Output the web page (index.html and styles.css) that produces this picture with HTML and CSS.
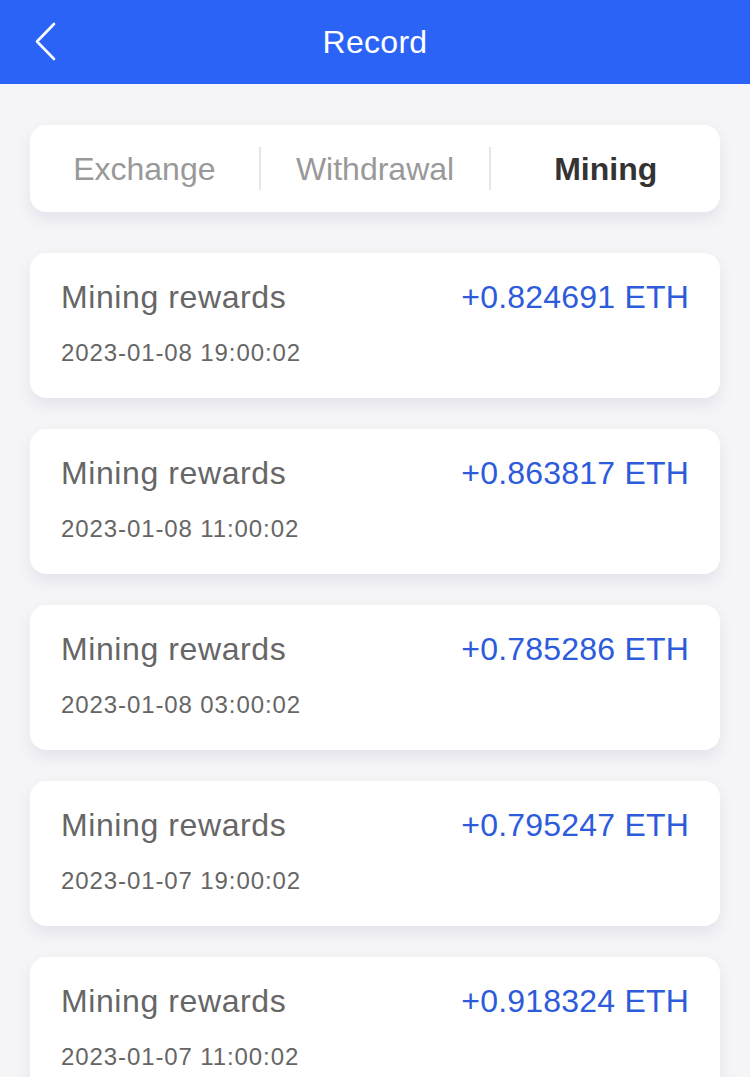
FILE: index.html
```html
<!DOCTYPE html>
<html>
<head>
<meta charset="utf-8">
<link rel="stylesheet" href="styles.css">
</head>
<body>
<header class="topbar">
  <span class="back">
    <svg width="24" height="40" viewBox="0 0 24 40"><path d="M19 3 L2 20.5 L19 38" fill="none" stroke="#fff" stroke-width="2.6" stroke-linecap="round" stroke-linejoin="round"/></svg>
  </span>
  <h1 class="title">Record</h1>
</header>
<main class="content">
  <nav class="tabs">
    <div class="tab">Exchange</div>
    <div class="sep"></div>
    <div class="tab">Withdrawal</div>
    <div class="sep"></div>
    <div class="tab active">Mining</div>
  </nav>
  <div class="card">
    <div class="row"><span class="label">Mining rewards</span><span class="amount">+0.824691 ETH</span></div>
    <div class="date">2023-01-08 19:00:02</div>
  </div>
  <div class="card">
    <div class="row"><span class="label">Mining rewards</span><span class="amount">+0.863817 ETH</span></div>
    <div class="date">2023-01-08 11:00:02</div>
  </div>
  <div class="card">
    <div class="row"><span class="label">Mining rewards</span><span class="amount">+0.785286 ETH</span></div>
    <div class="date">2023-01-08 03:00:02</div>
  </div>
  <div class="card">
    <div class="row"><span class="label">Mining rewards</span><span class="amount">+0.795247 ETH</span></div>
    <div class="date">2023-01-07 19:00:02</div>
  </div>
  <div class="card">
    <div class="row"><span class="label">Mining rewards</span><span class="amount">+0.918324 ETH</span></div>
    <div class="date">2023-01-07 11:00:02</div>
  </div>
</main>
</body>
</html>
```
FILE: styles.css
```css
* { box-sizing: border-box; }
html, body {
  margin: 0;
  padding: 0;
  background: #f5f5f7;
  font-family: "Liberation Sans", Arial, sans-serif;
}
body { height: 1077px; overflow: hidden; }
.topbar {
  height: 84px;
  background: #2b63f6;
  display: flex;
  align-items: center;
  justify-content: center;
  position: relative;
}
.back {
  position: absolute;
  left: 35px;
  top: 21px;
  width: 24px;
  height: 40px;
  display: block;
}
.back svg { display: block; }
.title {
  margin: 0;
  font-size: 32px;
  font-weight: normal;
  color: #fff;
  line-height: 40px;
  letter-spacing: 0.3px;
}
.content {
  padding: 41px 30px 0;
  display: flex;
  flex-direction: column;
  gap: 31px;
}
.tabs {
  height: 87px;
  background: #fff;
  border-radius: 16px;
  box-shadow: 0 7px 14px rgba(110, 105, 170, 0.13);
  display: flex;
  align-items: center;
  margin-bottom: 10px;
}
.tab {
  flex: 1;
  text-align: center;
  font-size: 32px;
  line-height: 40px;
  color: #999;
}
.tab.active {
  color: #333;
  font-weight: bold;
}
.sep {
  width: 2px;
  height: 43px;
  background: #e6e6e6;
}
.card {
  background: #fff;
  border-radius: 16px;
  box-shadow: 0 7px 14px rgba(110, 105, 170, 0.13);
  padding: 24px 31px 30px 31px;
  height: 145px;
  flex-shrink: 0;
}
.row {
  display: flex;
  justify-content: space-between;
  align-items: baseline;
  line-height: 40px;
}
.label {
  font-size: 32px;
  color: #666;
  letter-spacing: 0.6px;
}
.amount {
  font-size: 32px;
  color: #2d5bdc;
  letter-spacing: 0.2px;
}
.date {
  margin-top: 21px;
  font-size: 24px;
  line-height: 30px;
  color: #666;
  letter-spacing: 0.9px;
}
```
